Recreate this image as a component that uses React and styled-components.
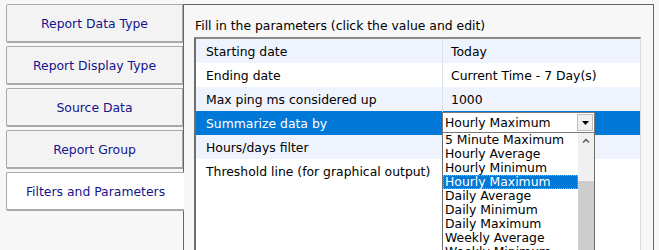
import styled, { createGlobalStyle } from "styled-components"

const GlobalStyle = createGlobalStyle`
    html, body {
        margin: 0;
        padding: 0;
        background: #f7f7f7;
        overflow: hidden;
    }
    body {
        font-family: "DejaVu Sans", Verdana, sans-serif;
        font-size: 12.4px;
        color: #000;
    }
`

const Page = styled.div`
    display: flex;
    align-items: flex-start;
    padding: 4px 0 0 6px;
    height: 250px;
    box-sizing: border-box;
`
const TabList = styled.ul`
    list-style: none;
    margin: 0;
    padding: 0;
    width: 177px;
    display: flex;
    flex-direction: column;
    gap: 3px;
    position: relative;
    z-index: 1;
`
const Tab = styled.li`
    box-sizing: border-box;
    height: 39px;
    width: ${p => (p.$active ? "178px" : "177px")};
    display: flex;
    align-items: center;
    justify-content: center;
    border: 1px solid #a9a9a9;
    border-bottom-width: 2px;
    border-right: ${p => (p.$active ? "none" : "1px solid #a9a9a9")};
    border-radius: 2px 0 0 2px;
    background: ${p => (p.$active ? "#ffffff" : "#f3f3f3")};
    color: #14148c;
`
const Panel = styled.section`
    box-sizing: border-box;
    width: 471px;
    height: 260px;
    border: 1px solid #666;
    background: #f7f7f7;
    padding: 0 12px 0 10px;
    display: flex;
    flex-direction: column;
`
const Caption = styled.p`
    margin: 0;
    padding: 13px 0 0 1px;
    height: 32px;
    box-sizing: border-box;
    line-height: 16px;
`
const Grid = styled.div`
    flex: 1;
    background: #fff;
    border-top: 2px solid #8a8a8a;
    border-left: 2px solid #6e6e6e;
    border-right: 1px solid #dcdcdc;
    position: relative;
`
const Row = styled.div`
    display: grid;
    grid-template-columns: 247px 1fr;
    height: 24px;
    background: ${p => (p.$selected ? "#0078d7" : p.$odd ? "#eef3fd" : "#ffffff")};
    color: ${p => (p.$selected ? "#ffffff" : "#000")};
`
const Label = styled.div`
    display: flex;
    align-items: center;
    padding-left: 10px;
    border-right: 1px solid #dde2ea;
`
const Value = styled.div`
    display: flex;
    align-items: center;
    padding-left: 8px;
    position: relative;
`
const Combo = styled.div`
    position: absolute;
    left: -1px;
    top: 1px;
    width: 153px;
    z-index: 2;
`
const ComboBox = styled.div`
    box-sizing: border-box;
    height: 21px;
    display: flex;
    align-items: center;
    background: #fff;
    border: 1px solid #7a7a7a;
    color: #000;
    padding: 0 1px 0 2px;
`
const ComboText = styled.span`
    flex: 1;
`
const ComboButton = styled.span`
    box-sizing: border-box;
    width: 16px;
    height: 17px;
    display: flex;
    align-items: center;
    justify-content: center;
    background: #efefef;
    border: 1px solid #bdbdbd;
`
const DropList = styled.div`
    box-sizing: border-box;
    height: 130px;
    display: flex;
    background: #fff;
    border: 1px solid #6e6e6e;
    border-top: none;
    color: #000;
`
const Options = styled.ul`
    list-style: none;
    margin: 0;
    padding: 0;
    flex: 1;
    overflow: hidden;
`
const Option = styled.li`
    box-sizing: border-box;
    height: 14px;
    line-height: 13px;
    padding-left: 2px;
    white-space: nowrap;
    background: ${p => (p.$selected ? "#0078d7" : "transparent")};
    color: ${p => (p.$selected ? "#fff" : "#000")};
    outline: ${p => (p.$selected ? "1px dotted #e0a040" : "none")};
    outline-offset: -1px;
`
const ScrollBar = styled.div`
    width: 16px;
    background: #f0f0f0;
    display: flex;
    flex-direction: column;
    align-items: center;
`
const ScrollArrow = styled.span`
    height: 14px;
    display: flex;
    align-items: center;
`
const ScrollThumb = styled.div`
    margin-top: 34px;
    width: 16px;
    flex: 1;
    background: #cdcdcd;
`

const params = [
    ["Starting date", "Today"],
    ["Ending date", "Current Time - 7 Day(s)"],
    ["Max ping ms considered up", "1000"],
    ["Summarize data by", ""],
    ["Hours/days filter", ""],
    ["Threshold line (for graphical output)", ""],
]

const options = [
    "5 Minute Maximum",
    "Hourly Average",
    "Hourly Minimum",
    "Hourly Maximum",
    "Daily Average",
    "Daily Minimum",
    "Daily Maximum",
    "Weekly Average",
    "Weekly Minimum",
]

const tabs = ["Report Data Type", "Report Display Type", "Source Data", "Report Group", "Filters and Parameters"]

export default function App() {
    return (
        <>
            <GlobalStyle />
            <Page>
                <TabList>
                    {tabs.map((t, i) => (
                        <Tab key={t} $active={i === 4}>{t}</Tab>
                    ))}
                </TabList>
                <Panel>
                    <Caption>Fill in the parameters (click the value and edit)</Caption>
                    <Grid>
                        {params.map(([label, value], i) => (
                            <Row key={label} $odd={i % 2 === 0} $selected={i === 3}>
                                <Label>{label}</Label>
                                <Value>
                                    {value}
                                    {i === 3 && (
                                        <Combo>
                                            <ComboBox>
                                                <ComboText>Hourly Maximum</ComboText>
                                                <ComboButton>
                                                    <svg width="7" height="4" viewBox="0 0 7 4">
                                                        <path d="M0 0h7L3.5 4z" fill="#000" />
                                                    </svg>
                                                </ComboButton>
                                            </ComboBox>
                                            <DropList>
                                                <Options>
                                                    {options.map((o, k) => (
                                                        <Option key={o} $selected={k === 3}>{o}</Option>
                                                    ))}
                                                </Options>
                                                <ScrollBar>
                                                    <ScrollArrow>
                                                        <svg width="8" height="5" viewBox="0 0 8 5">
                                                            <path d="M1 4.5L4 1.5L7 4.5" fill="none" stroke="#555" strokeWidth="1.4" />
                                                        </svg>
                                                    </ScrollArrow>
                                                    <ScrollThumb />
                                                </ScrollBar>
                                            </DropList>
                                        </Combo>
                                    )}
                                </Value>
                            </Row>
                        ))}
                    </Grid>
                </Panel>
            </Page>
        </>
    )
}
